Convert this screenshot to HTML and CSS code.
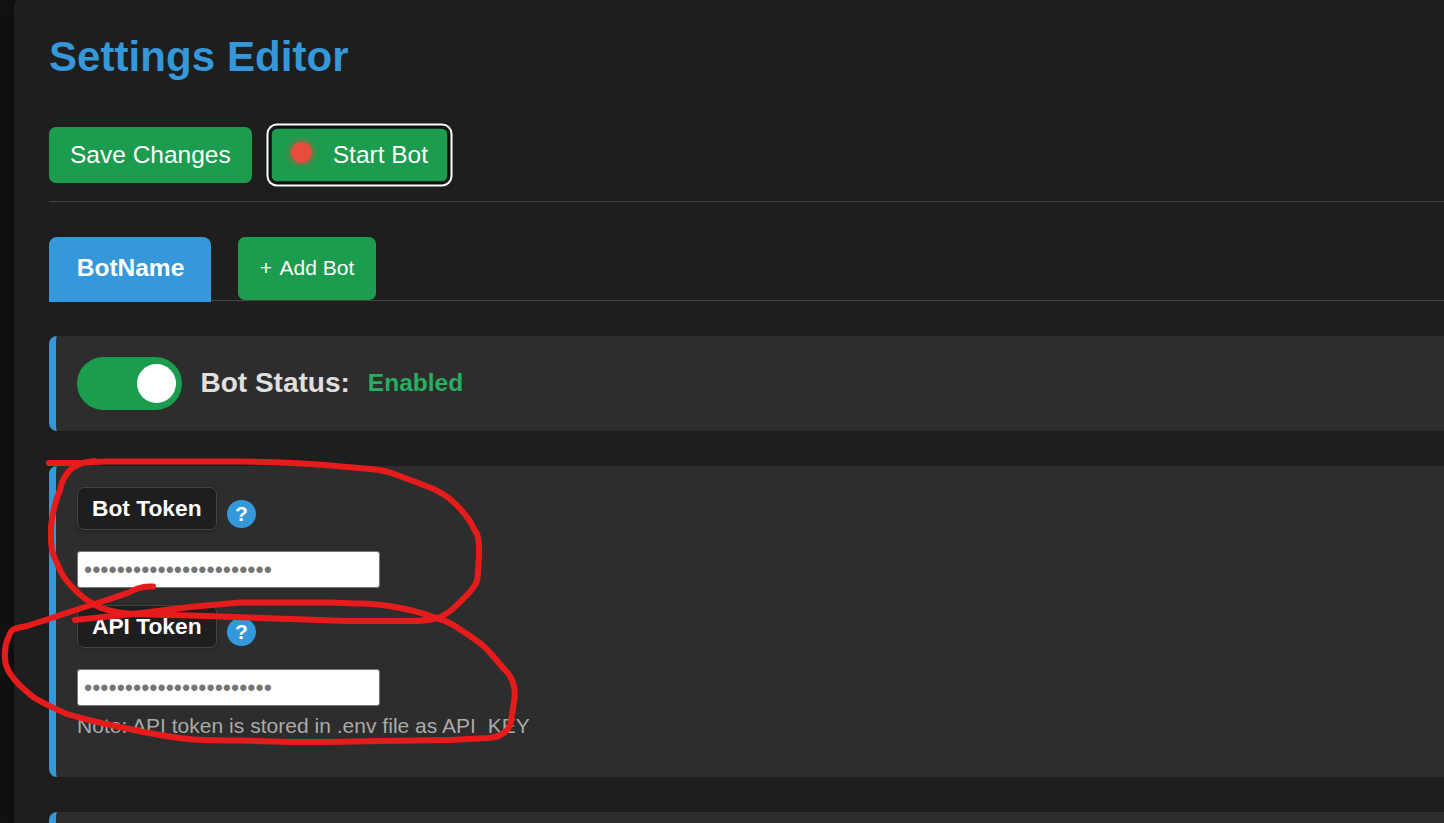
FILE: index.html
```
<!DOCTYPE html>
<html lang="en">
<head>
<meta charset="utf-8">
<title>Settings Editor</title>
<link rel="stylesheet" href="styles.css">
</head>
<body>
<main class="container">
  <h1 class="title">Settings Editor</h1>
  <div class="actions">
    <button class="btn" type="button">Save Changes</button>
    <button class="btn btn-focused" type="button"><span class="status-dot"></span>Start Bot</button>
  </div>
  <nav class="tabs">
    <button class="tab" type="button">BotName</button>
    <button class="btn add-bot" type="button"><span class="plus">+</span> Add Bot</button>
  </nav>
  <section class="card status-card">
    <span class="toggle"><span class="knob"></span></span>
    <span class="status-label">Bot Status:</span>
    <span class="status-value">Enabled</span>
  </section>
  <section class="card token-card">
    <div class="field">
      <div class="field-head"><label class="label" for="bot">Bot Token</label><span class="help">?</span></div>
      <input class="input" id="bot" type="text" placeholder="•••••••••••••••••••••••">
    </div>
    <div class="field">
      <div class="field-head"><label class="label" for="api">API Token</label><span class="help">?</span></div>
      <input class="input" id="api" type="text" placeholder="•••••••••••••••••••••••">
    </div>
    <p class="note">Note: API token is stored in .env file as API_KEY</p>
  </section>
  <section class="card next-card"></section>
</main>
<svg class="ink" width="1444" height="823" viewBox="0 0 1444 823">
  <path d="M49 463H75L105 461.500H240Q290 462 325 465L370 469Q385 470 397 475L425 485.500Q440 491 450 499 464 511 471 523L474 529 477 534Q479 539 479 547V555L478 573Q478 580 475 585 472 589 469 593L457 605Q446 616 435 618.500 425 621 410 621H347L290 619 207 616 133 614Q113 612 101 608 86 601 75 590 65 580 61 572L56 561Q51 551 51 540V527Q52 514 57 498L60 490Q62 479 69 471 76 463 94 461"/>
  <path d="M153 586.500Q142 586 134 590 129 593 107 600L80 608.500 47 619.500 27 626 17 628Q11 629 9 636 5 644 5 652 4 662 8 670 14 681 25 690L33 697Q48 706 67 714 90 721 127 728.500 165 737 193 739.500 210 740.500 240 740.500L290 742H330L380 741 450 740 488 738Q501 737 506 731 511 727 512 715L514 702Q516 690 513 683 511 676 505 670L493 656Q484 645 470 636L455 626Q445 620 433 617 421 612 400 608 375 603 355 603.500L330 602.500H240L190 607 133 614 75 620"/>
</svg>
</body>
</html>
```
FILE: styles.css
```
* { box-sizing: border-box; }
body {
  margin: 0;
  height: 823px;
  overflow: hidden;
  background: #121212;
  color: #e0e0e0;
  font-family: "Liberation Sans", Arial, sans-serif;
}
.container {
  height: 829px;
  margin: -6px 0 0 14px;
  padding: 38px 0 0 35px;
  background: #1e1e1e;
  border-radius: 14px 0 0 0;
  box-shadow: 0 7px 18px rgba(0, 0, 0, .5);
}
.title {
  margin: 0 0 46px;
  color: #3498db;
  font-size: 42px;
  line-height: 49px;
  letter-spacing: .06px;
}
.actions {
  display: flex;
  gap: 18px;
  height: 75px;
  border-bottom: 1px solid #444;
}
.btn {
  height: 56px;
  padding: 0 21px;
  border: 0;
  border-radius: 7px;
  background: #1b9c4e;
  color: #fff;
  font: 24.5px "Liberation Sans", Arial, sans-serif;
  white-space: nowrap;
}
.btn-focused {
  display: flex;
  align-items: center;
  box-shadow: inset 0 0 0 1.750px #101010, 0 0 0 1.500px #101010, 0 0 0 3.500px #fff;
}
.status-dot {
  width: 21px;
  height: 21px;
  margin: 0 21px 5px 0;
  border-radius: 50%;
  background: #e74c3c;
  box-shadow: 0 0 9px #e74c3c;
}
.tabs {
  display: flex;
  gap: 27px;
  height: 64px;
  margin-top: 35px;
  border-bottom: 1px solid #444;
}
.tab {
  width: 162px;
  height: 65px;
  padding: 0 0 3px 1px;
  border: 0;
  border-radius: 8px 8px 0 0;
  background: #3498db;
  color: #fff;
  font: bold 24.5px "Liberation Sans", Arial, sans-serif;
}
.add-bot {
  width: 138px;
  height: 63px;
  padding-bottom: 2px;
  font-size: 21px;
}
.plus { margin-right: 3px; }
.card {
  margin-top: 35px;
  padding: 21px;
  border-left: 7px solid #3498db;
  border-radius: 8px 0 0 8px;
  background: #2d2d2d;
}
.status-card {
  display: flex;
  align-items: center;
  height: 95px;
  font-weight: bold;
}
.toggle {
  display: flex;
  justify-content: flex-end;
  align-items: center;
  width: 105px;
  height: 53px;
  margin-right: 18.5px;
  padding-right: 6px;
  border-radius: 27px;
  background: #1b9c4e;
}
.knob {
  width: 39px;
  height: 39px;
  border-radius: 50%;
  background: #fff;
}
.status-label {
  margin-right: 18px;
  padding-bottom: 2px;
  font-size: 28px;
}
.status-value {
  padding-bottom: 2px;
  color: #27ae60;
  font-size: 24.5px;
}
.token-card { height: 311px; }
.field { height: 118px; }
.field-head {
  display: flex;
  gap: 10px;
  height: 64px;
}
.label {
  width: 140px;
  height: 43px;
  padding-left: 14px;
  border: 1px solid #444;
  border-radius: 7px;
  background: #1e1e1e;
  box-shadow: 0 2px 4px rgba(0, 0, 0, .2);
  color: #fff;
  font-size: 22.75px;
  font-weight: bold;
  line-height: 40px;
}
.help {
  width: 29px;
  height: 28px;
  margin-top: 13px;
  border-radius: 50%;
  background: #3498db;
  color: #fff;
  font-size: 21px;
  font-weight: bold;
  line-height: 27px;
  text-align: center;
}
.input {
  display: block;
  width: 303px;
  height: 37px;
  padding: 1px 5px 0 6px;
  border: 1px solid #767676;
  border-radius: 3px;
  background: #fff;
  font: 23.333px "Liberation Sans", Arial, sans-serif;
}
.input::placeholder { color: #757575; }
.note {
  margin: -9px 0 0;
  color: #aaa;
  font-size: 21px;
  line-height: 24px;
  letter-spacing: .02px;
}
.next-card {
  height: 11px;
  padding: 0;
  border-radius: 8px 0 0 0;
}
/* Hand-drawn marker strokes laid over the page */
.ink {
  position: absolute;
  top: 0;
  left: 0;
  fill: none;
  stroke: #e61c1c;
  stroke-width: 6;
  stroke-linecap: round;
  stroke-linejoin: round;
  pointer-events: none;
}
```
